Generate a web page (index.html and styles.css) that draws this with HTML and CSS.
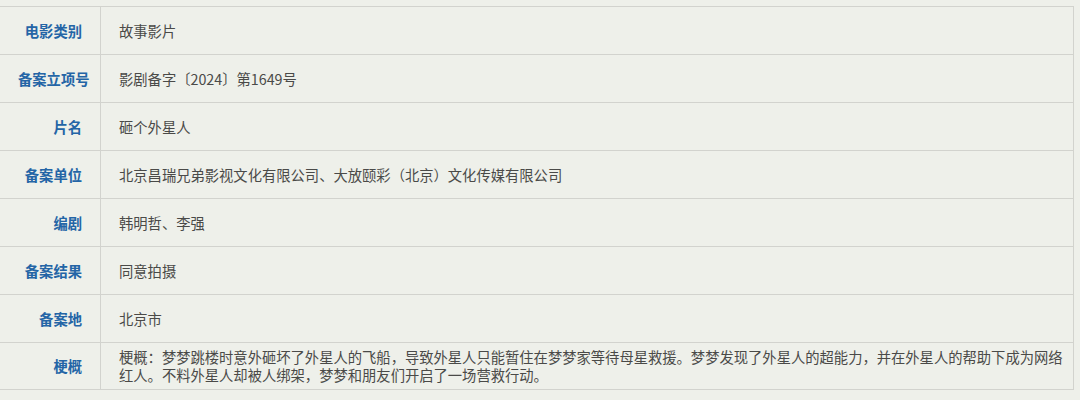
FILE: index.html
```html
<!DOCTYPE html>
<html lang="zh-CN">
<head>
  <meta charset="UTF-8" />
  <meta name="viewport" content="width=device-width, initial-scale=1.0"/>
  <title>电影备案信息</title>
  <link rel="stylesheet" href="styles.css">
</head>
<body>
  <table class="info">
    <colgroup>
      <col class="label-col">
      <col>
    </colgroup>
    <tr>
      <th>电影类别</th>
      <td>故事影片</td>
    </tr>
    <tr>
      <th>备案立项号</th>
      <td>影剧备字〔2024〕第1649号</td>
    </tr>
    <tr>
      <th>片名</th>
      <td>砸个外星人</td>
    </tr>
    <tr>
      <th>备案单位</th>
      <td>北京昌瑞兄弟影视文化有限公司、大放颐彩（北京）文化传媒有限公司</td>
    </tr>
    <tr>
      <th>编剧</th>
      <td>韩明哲、李强</td>
    </tr>
    <tr>
      <th>备案结果</th>
      <td>同意拍摄</td>
    </tr>
    <tr>
      <th>备案地</th>
      <td>北京市</td>
    </tr>
    <tr class="summary">
      <th>梗概</th>
      <td>梗概：梦梦跳楼时意外砸坏了外星人的飞船，导致外星人只能暂住在梦梦家等待母星救援。梦梦发现了外星人的超能力，并在外星人的帮助下成为网络红人。不料外星人却被人绑架，梦梦和朋友们开启了一场营救行动。</td>
    </tr>
  </table>
</body>
</html>
```

FILE: styles.css
```css
body {
  margin: 0;
  padding: 0;
  background: #eef0ea;
  font-family: "Noto Sans CJK SC", "Noto Sans", sans-serif;
  overflow: hidden;
}

.info {
  border-collapse: collapse;
  table-layout: fixed;
  width: 1075px;
  margin: 6px 0 0 -1px;
  font-size: 14.3px;
}

.label-col {
  width: 101px;
}

.info th,
.info td {
  border: 1px solid #d2d3ce;
  height: 48px;
  padding: 0 18px;
  vertical-align: middle;
  box-sizing: border-box;
}

.info th {
  text-align: right;
  color: #2465a6;
  font-weight: bold;
  white-space: nowrap;
}

.info td {
  text-align: left;
  color: #4a4a48;
  padding-right: 6px;
}

.info .summary th,
.info .summary td {
  height: 47px;
  line-height: 18px;
  padding-top: 5px;
  padding-bottom: 5px;
}
```
